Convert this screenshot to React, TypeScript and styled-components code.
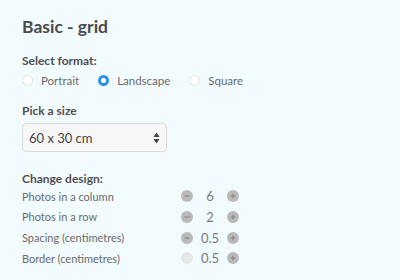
import React, { useState } from "react";
import styled, { createGlobalStyle } from "styled-components";

const Global = createGlobalStyle`
  html, body { margin: 0; padding: 0; background: #f2fbfe; }
  body { font-family: "Lato", "Noto Sans", sans-serif; color: #444; }
`;

const Page = styled.div`
  padding: 16px 22px;
  width: 400px;
  height: 280px;
  box-sizing: border-box;
`;

const Title = styled.h1`
  margin: 0 0 16px;
  font-size: 17.5px;
  font-weight: 700;
  color: #4a4a4a;
`;

const Label = styled.div<{ $gap?: number }>`
  font-size: 12px;
  font-weight: 700;
  color: #505050;
  margin-bottom: ${(p) => p.$gap ?? 5}px;
`;

const RadioRow = styled.div`
  display: flex;
  align-items: center;
  gap: 19px;
  margin-bottom: 16px;
`;

const RadioItem = styled.label`
  display: flex;
  align-items: center;
  gap: 8px;
  font-size: 11.5px;
  color: #6a6a6a;
`;

const RadioDot = styled.span<{ $on?: boolean }>`
  width: 11px;
  height: 11px;
  border-radius: 50%;
  box-sizing: border-box;
  border: ${(p) => (p.$on ? "3.5px solid #2f8ff0" : "1px solid #e0e0e0")};
  background: #fff;
`;

const Select = styled.div`
  width: 145px;
  height: 29px;
  box-sizing: border-box;
  border: 1px solid #dcdcdc;
  border-radius: 4px;
  background: #f7f7f7;
  display: flex;
  align-items: center;
  justify-content: space-between;
  padding: 0 6px 0 6px;
  font-size: 13px;
  color: #444;
  margin-bottom: 19px;
`;

const Arrows = styled.svg`
  width: 7px;
  height: 12px;
`;

const Rows = styled.div`
  display: flex;
  flex-direction: column;
`;

const Row = styled.div`
  display: grid;
  grid-template-columns: 159px 12px 34px 12px;
  align-items: center;
  height: 20.67px;
  font-size: 11px;
  color: #6a6a6a;
`;

const Circle = styled.span<{ $dim?: boolean }>`
  width: 12px;
  height: 12px;
  border-radius: 50%;
  background: ${(p) => (p.$dim ? "#e6e6e6" : "#bababa")};
  color: ${(p) => (p.$dim ? "#f2f2f2" : "#7e7e7e")};
  display: flex;
  align-items: center;
  justify-content: center;
`;

const Value = styled.span`
  text-align: center;
  font-size: 13px;
  color: #7a7a7a;
`;

const Minus = () => (
  <svg width="6" height="6" viewBox="0 0 6 6">
    <path d="M0.5 3h5" stroke="currentColor" strokeWidth="1" />
  </svg>
);
const Plus = () => (
  <svg width="6" height="6" viewBox="0 0 6 6">
    <path d="M0.5 3h5M3 0.5v5" stroke="currentColor" strokeWidth="1" />
  </svg>
);

const rows = [
  { label: "Photos in a column", value: "6" },
  { label: "Photos in a row", value: "2" },
  { label: "Spacing (centimetres)", value: "0.5" },
  { label: "Border (centimetres)", value: "0.5", dim: true },
];

export default function App() {
  const [fmt] = useState("Landscape");
  return (
    <Page>
      <Global />
      <Title>Basic - grid</Title>
      <Label $gap={6}>Select format:</Label>
      <RadioRow>
        {["Portrait", "Landscape", "Square"].map((f) => (
          <RadioItem key={f}>
            <RadioDot $on={f === fmt} />
            {f}
          </RadioItem>
        ))}
      </RadioRow>
      <Label>Pick a size</Label>
      <Select>
        <span>60 x 30 cm</span>
        <Arrows viewBox="0 0 7 12">
          <path d="M3.5 0.5L6.5 5H0.5z" fill="#444" />
          <path d="M3.5 11.5L6.5 7H0.5z" fill="#444" />
        </Arrows>
      </Select>
      <Label $gap={0}>Change design:</Label>
      <Rows>
        {rows.map((r) => (
          <Row key={r.label}>
            <span>{r.label}</span>
            <Circle $dim={r.dim}>
              <Minus />
            </Circle>
            <Value>{r.value}</Value>
            <Circle>
              <Plus />
            </Circle>
          </Row>
        ))}
      </Rows>
    </Page>
  );
}
